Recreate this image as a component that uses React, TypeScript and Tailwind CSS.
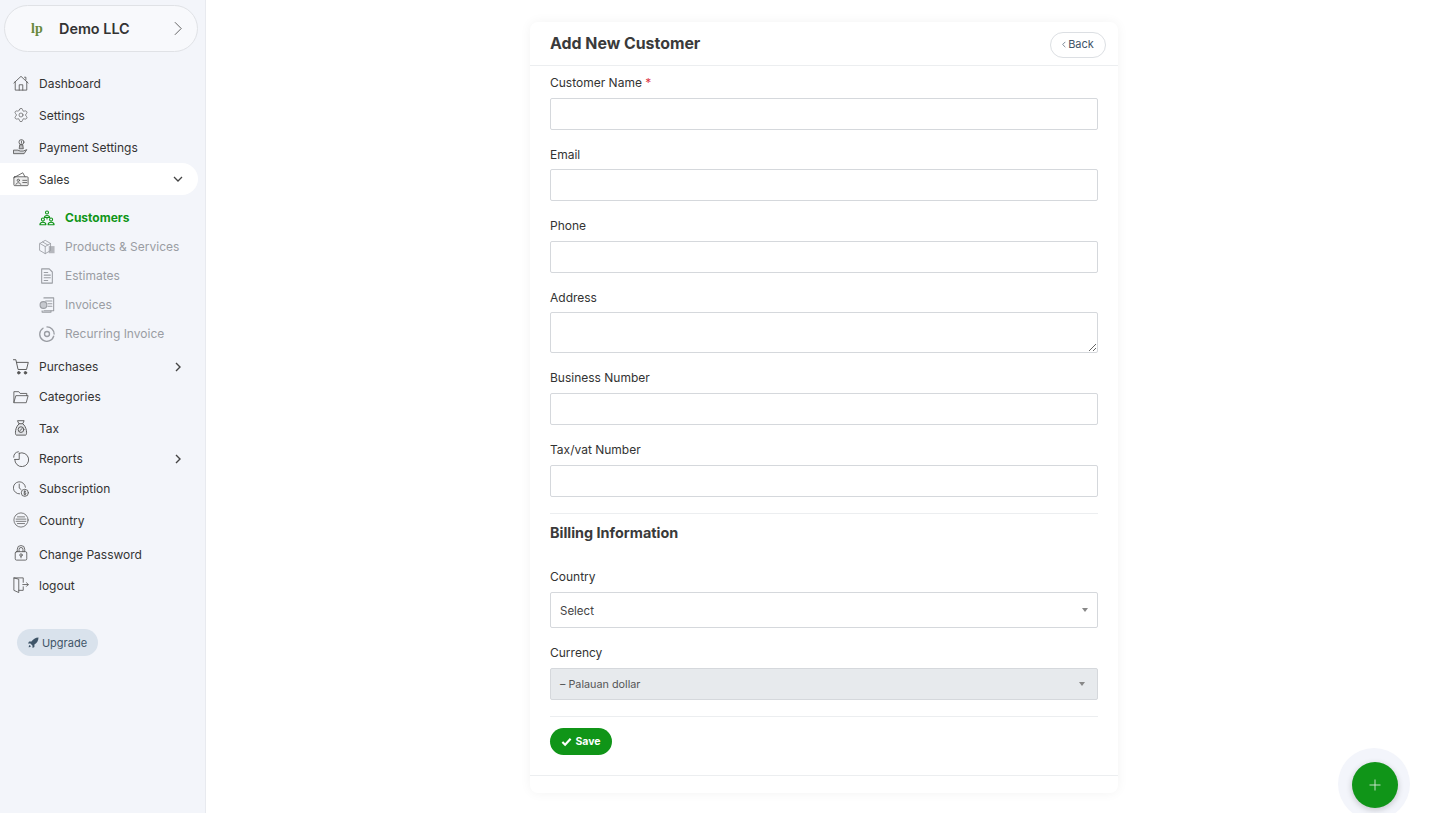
import React from "react";
import { Settings as LucideGear } from "lucide-react";

const S = ({ children, className = "", strokeWidth = 0.95 }: { children: React.ReactNode; className?: string; strokeWidth?: number }) => (
  <svg viewBox="0 0 18 18" fill="none" stroke="currentColor" strokeWidth={strokeWidth} strokeLinecap="round" strokeLinejoin="round" className={"w-[16px] h-[16px] shrink-0 " + className}>
    {children}
  </svg>
);

const Home = () => (
  <S><path d="M1 9 9 1.500l8 7.500" /><path d="M2.500 7.500V17h13V7.500" /><path d="M7 17v-6h4v6" /><path d="M13 2.500h1.500v3" /></S>
);
const Gear = () => <LucideGear className="w-[16px] h-[16px] shrink-0" strokeWidth={1} />;
const Pay = () => (
  <S>
    <circle cx="9.500" cy="3.500" r="2.800" /><path d="M9.500 2.200v2.600" />
    <path d="M8 6.500h3l.6 4.500H7.400z" fill="currentColor" fillOpacity="0.35" />
    <path d="M1 12.500h4.500l2.500 1h3.500l4-1.500-3 4.500H1z" fill="currentColor" fillOpacity="0.2" />
  </S>
);
const SalesI = () => (
  <S>
    <path d="M1 7.500 11 2l2.500 4.500" />
    <rect x="1" y="6.500" width="16" height="10" rx="1" fill="currentColor" fillOpacity="0.1" />
    <circle cx="6" cy="10.500" r="1.300" /><path d="M3.300 15c.5-2.500 5-2.500 5.400 0" /><path d="M11 10.500h4.500M11 13h4.500" />
  </S>
);
const CustomersI = () => (
  <S strokeWidth={1.2}>
    <circle cx="9" cy="2.800" r="1.700" /><path d="M6 8.500c.3-3.200 5.700-3.200 6 0z" />
    <path d="M9 8.500v1.500" />
    <circle cx="4.400" cy="10.800" r="1.700" /><path d="M1 16.500c.3-3.500 6.500-3.500 6.800 0z" />
    <circle cx="13.600" cy="10.800" r="1.700" /><path d="M10.200 16.500c.3-3.500 6.500-3.500 6.800 0z" />
  </S>
);
const Box = () => (
  <S>
    <path d="M1 5 7 1.500 13 5v8L7 16.500 1 13z" /><path d="M1 5 7 8.500 13 5M7 8.500v8M4 3.300l6 3.500" />
    <rect x="11" y="8" width="6.500" height="8" fill="currentColor" fillOpacity="0.7" stroke="none" />
  </S>
);
const Doc = () => (
  <S strokeWidth={1.2}><path d="M3 1h8.500L15 4.500V17H3z" /><path d="M5.800 5h4M5.800 8h7M5.800 11h7M5.800 14h4" /></S>
);
const Invoice = () => (
  <S strokeWidth={1.2}>
    <path d="M5.500 1h11v14.500h-11" /><path d="M7.500 4.500h7M10 7.500h4.500M10 10.500h4.500" />
    <circle cx="5" cy="9" r="3.800" fill="currentColor" fillOpacity="0.5" /><path d="M3.500 15.500V17h10v-1.500" />
  </S>
);
const Recur = () => (
  <S strokeWidth={1.5}>
    <circle cx="9" cy="9" r="2.800" /><path d="M9 1a8 8 0 0 1 8 8M16.500 11.500A8 8 0 1 1 4.500 2.500" />
  </S>
);
const Cart = () => (
  <S strokeWidth={1.05}><path d="M0.500 .8h2.700l2.500 11h9.500l2-8H4" /><circle cx="6.500" cy="15.500" r="1.400" fill="currentColor" /><circle cx="14" cy="15.500" r="1.400" fill="currentColor" /></S>
);
const Folder = () => (
  <S><path d="M1 15V3h5.500L8 5h7.500v2.500" /><path d="M1 15 3.200 7.500H17L15 15z" /></S>
);
const TaxI = () => (
  <S strokeWidth={1.05}>
    <path d="M5.500 .8h7L11 4.200H7z" /><path d="M7 4.200C2 8 2 17 3.800 17h10.400C16 17 16 8 11 4.200" fill="currentColor" fillOpacity="0.1" />
    <circle cx="9" cy="10.800" r="3.200" /><path d="M7.500 12.300l3-3" />
  </S>
);
const Pie = () => (
  <S strokeWidth={1}><path d="M7 2.500A7.800 7.800 0 1 1 2 9.500" /><path d="M7 2.500V9.500H2" /><path d="M6 .8A6.200 6.200 0 0 0 .8 7" /></S>
);
const Sub = () => (
  <S>
    <path d="M7.500 14.500A6.800 6.800 0 1 1 14 7" /><path d="M7 3.500V8l2 1.500" /><circle cx="13.300" cy="13.300" r="4" fill="#f3f5fa" /><path d="M14.500 12c-.6-.7-2.400-.6-2.400.4 0 1.200 2.600.8 2.600 2 0 1-1.900 1-2.600.3M13.300 10.800v5" />
  </S>
);
const Globe = () => (
  <S strokeWidth={0.85}><circle cx="9" cy="9" r="8" /><path d="M5 5.500h8M3.500 8h11M3.500 10.500h11M5 13h8" /></S>
);
const Lock = () => (
  <S><path d="M4.800 7.500V4.800a4.200 4.200 0 0 1 8.400 0v2.700" /><rect x="2.500" y="7.500" width="13" height="9.500" rx="1.500" /><circle cx="9" cy="11.300" r="1.400" /><path d="M9 12.700v1.800" /><path d="M6.800 7.500V5a2.200 2.200 0 0 1 4.400 0v2.500" /></S>
);
const Logout = () => (
  <S>
    <path d="M11.500 6V1H1v14l5.500 2.500V2.500L1 1M6.500 15h5V11" /><path d="M11 8.500h6M15.200 6.500l2 2-2 2" />
  </S>
);
const ChevR = () => (
  <svg viewBox="0 0 10 10" fill="none" stroke="currentColor" strokeWidth="1.4" className="w-[10px] h-[10px]"><path d="M3 1l4 4-4 4" /></svg>
);
const ChevD = () => (
  <svg viewBox="0 0 10 10" fill="none" stroke="currentColor" strokeWidth="1.300" className="w-[10px] h-[10px]"><path d="M1 3l4 4 4-4" /></svg>
);

const Row = ({ icon, label, h, arrow, active, nudge = "" }: { icon: React.ReactNode; label: string; h: string; arrow?: "r" | "d"; active?: boolean; nudge?: string }) => (
  <div className={"flex items-center pl-[13px] pr-[15px] text-[#333] " + h + (active ? " bg-white rounded-r-full" : "")}>
    <span className="text-[#555] w-[26px] flex">{icon}</span>
    <span className={"text-[12px] leading-none flex-1 " + nudge}>{label}</span>
    {arrow === "r" && <span className="text-[#444]"><ChevR /></span>}
    {arrow === "d" && <span className="text-[#444]"><ChevD /></span>}
  </div>
);

const Sub2 = ({ icon, label, active }: { icon: React.ReactNode; label: string; active?: boolean }) => (
  <div className={"flex items-center h-[29px] pl-[39px] " + (active ? "text-[#109518] font-bold" : "text-[#9a9da3]")}>
    <span className="w-[26px] flex">{icon}</span>
    <span className="text-[12px] leading-none">{label}</span>
  </div>
);

const labelCls = "block text-[12px] h-[16px] leading-[16px] text-[#333] ";

const Field = ({ label, req, gap = "mb-[8px]", nudge = "pt-[1px]" }: { label: string; req?: boolean; gap?: string; nudge?: string }) => (
  <div className="mb-[16px]">
    <label className={labelCls + gap + " " + nudge}>
      {label}
      {req && <span className="text-[#dc3545]"> *</span>}
    </label>
    <input className="block w-full h-[32px] border border-[#d5d8dc] rounded-[2px] bg-white" />
  </div>
);

const Caret = () => <span className="w-0 h-0 border-x-[3.500px] border-x-transparent border-t-[4px] border-t-[#888]" />;

export default function App() {
  return (
    <div className="flex h-[813px] overflow-hidden bg-white relative" style={{ fontFamily: "Inter, 'Noto Sans', sans-serif" }}>
      <aside className="w-[206px] shrink-0 bg-[#f3f5fa] border-r border-[#e8eaef] pt-[5px]">
        <div className="mx-[4px] w-[194px] h-[47px] rounded-full bg-[#f8f9fc] border border-[#e0e2e6] flex items-center pl-[26px] pr-[14px]">
          <span className="text-[14px] leading-none font-bold text-[#6a8a3c] w-[28px]" style={{ fontFamily: "'Liberation Serif', serif" }}>lp</span>
          <span className="text-[14.400px] font-semibold text-[#333] flex-1 pt-[1px]">Demo LLC</span>
          <svg viewBox="0 0 10 16" fill="none" stroke="#555" strokeWidth="1" className="w-[9px] h-[15px]"><path d="M1 1l7 7-7 7" /></svg>
        </div>
        <nav className="mt-[15px] w-[198px]">
          <Row icon={<Home />} label="Dashboard" h="h-[32px]" nudge="pt-[2px]" />
          <Row icon={<Gear />} label="Settings" h="h-[32px]" nudge="pt-[2px]" />
          <Row icon={<Pay />} label="Payment Settings" h="h-[32px]" nudge="pt-[2px]" />
          <Row icon={<SalesI />} label="Sales" h="h-[32px]" arrow="d" active nudge="pt-[2px]" />
          <div className="pt-[8px] pb-[4px]">
            <Sub2 icon={<CustomersI />} label="Customers" active />
            <Sub2 icon={<Box />} label="Products & Services" />
            <Sub2 icon={<Doc />} label="Estimates" />
            <Sub2 icon={<Invoice />} label="Invoices" />
            <Sub2 icon={<Recur />} label="Recurring Invoice" />
          </div>
          <Row icon={<Cart />} label="Purchases" h="h-[30px]" arrow="r" />
          <Row icon={<Folder />} label="Categories" h="h-[30px]" />
          <Row icon={<TaxI />} label="Tax" h="h-[32px]" nudge="pt-[2px]" />
          <Row icon={<Pie />} label="Reports" h="h-[30px]" arrow="r" />
          <Row icon={<Sub />} label="Subscription" h="h-[30px]" />
          <Row icon={<Globe />} label="Country" h="h-[32px]" nudge="pt-[2px]" />
          <Row icon={<Lock />} label="Change Password" h="h-[33px]" nudge="pt-[4px]" />
          <Row icon={<Logout />} label="logout" h="h-[32px]" nudge="pt-[2px]" />
        </nav>
        <div className="ml-[17px] mt-[28px] w-[81px] h-[27px] rounded-full bg-[#d9e2ec] flex items-center justify-center gap-[3px] text-[#3f5568] text-[11px]">
          <svg viewBox="0 0 12 12" className="w-[11px] h-[11px]" fill="currentColor"><path d="M11.500.5C8 .7 5.500 2.200 3.800 5H1.200L0 7l2.600.2 2.200 2.200L5 12l2-1.200V8.200C9.800 6.500 11.300 4 11.500.5zM1.800 8.800C1 9.500.8 10.600.7 11.300c.8-.1 1.800-.3 2.500-1.100z" /></svg>
          <span className="pt-[2px]">Upgrade</span>
        </div>
      </aside>

      <main className="flex-1 flex pt-[22px] pl-[324px]">
        <div className="w-[588px] h-[771px] bg-white rounded-[8px] shadow-[0_0_12px_rgba(0,0,0,0.05)] flex flex-col">
          <div className="h-[44px] border-b border-[#eceef0] flex items-center justify-between pl-[20px] pr-[12px] shrink-0">
            <h1 className="text-[15.900px] font-bold text-[#3a3a3a] pt-[1px]">Add New Customer</h1>
            <div className="w-[56px] h-[26px] mt-[2px] rounded-full border border-[#dcdfe3] flex items-center justify-center gap-[2px] text-[#3f5568] text-[11px]">
              <svg viewBox="0 0 6 10" fill="none" stroke="currentColor" className="w-[4px] h-[7px]"><path d="M5 1 1 5l4 4" /></svg>
              Back
            </div>
          </div>
          <div className="px-[20px] pt-[9px] flex-1">
            <Field label="Customer Name" req gap="mb-[7px]" nudge="" />
            <Field label="Email" gap="mb-[7px]" />
            <Field label="Phone" />
            <div className="mb-[16px]">
              <label className={labelCls + "mb-[7px] pt-[1px]"}>Address</label>
              <textarea className="block w-full h-[41px] border border-[#d5d8dc] rounded-[2px] bg-white" />
            </div>
            <Field label="Business Number" />
            <Field label="Tax/vat Number" />
            <hr className="border-[#eceef0]" />
            <h2 className="text-[14.400px] font-bold text-[#3a3a3a] leading-[20px] mt-[9px] mb-[26px]">Billing Information</h2>
            <label className={labelCls + "mb-[7px]"}>Country</label>
            <div className="h-[36px] border border-[#d5d8dc] rounded-[2px] flex items-center justify-between pl-[9px] pr-[9px] text-[11.500px] text-[#444]">
              <span className="pt-[3px]">Select</span> <Caret />
            </div>
            <label className={labelCls + "mt-[16px] mb-[8px] pt-[1px]"}>Currency</label>
            <div className="h-[32px] border border-[#d5d8dc] rounded-[2px] bg-[#e7eaed] flex items-center justify-between pl-[9px] pr-[12px] text-[10.800px] text-[#555]">
              <span className="pt-[2px]">– Palauan dollar</span> <Caret />
            </div>
            <hr className="border-[#eceef0] mt-[16px]" />
            <div className="mt-[11px] w-[62px] h-[27px] rounded-full bg-[#109518] flex items-center justify-center gap-[3px] text-white text-[10.500px] font-bold">
              <svg viewBox="0 0 12 12" fill="none" stroke="currentColor" strokeWidth="2.400" className="w-[11px] h-[11px]"><path d="M1.500 6.500 4.500 9.500 10.500 3" /></svg>
              Save
            </div>
          </div>
          <div className="h-[18px] border-t border-[#eceef0] shrink-0" />
        </div>
      </main>

      <div className="absolute left-[1338px] top-[748px] w-[72px] h-[72px] rounded-full bg-[#f3f5fb] flex items-center justify-center">
        <div className="w-[46px] h-[46px] ml-[2px] mt-[1px] rounded-full bg-[#109518] shadow-[0_2px_6px_rgba(0,0,0,0.2)] flex items-center justify-center">
          <svg viewBox="0 0 12 12" stroke="#d8e8d8" strokeWidth="0.9" className="w-[12px] h-[12px]"><path d="M6 .5v11M.5 6h11" /></svg>
        </div>
      </div>
    </div>
  );
}
